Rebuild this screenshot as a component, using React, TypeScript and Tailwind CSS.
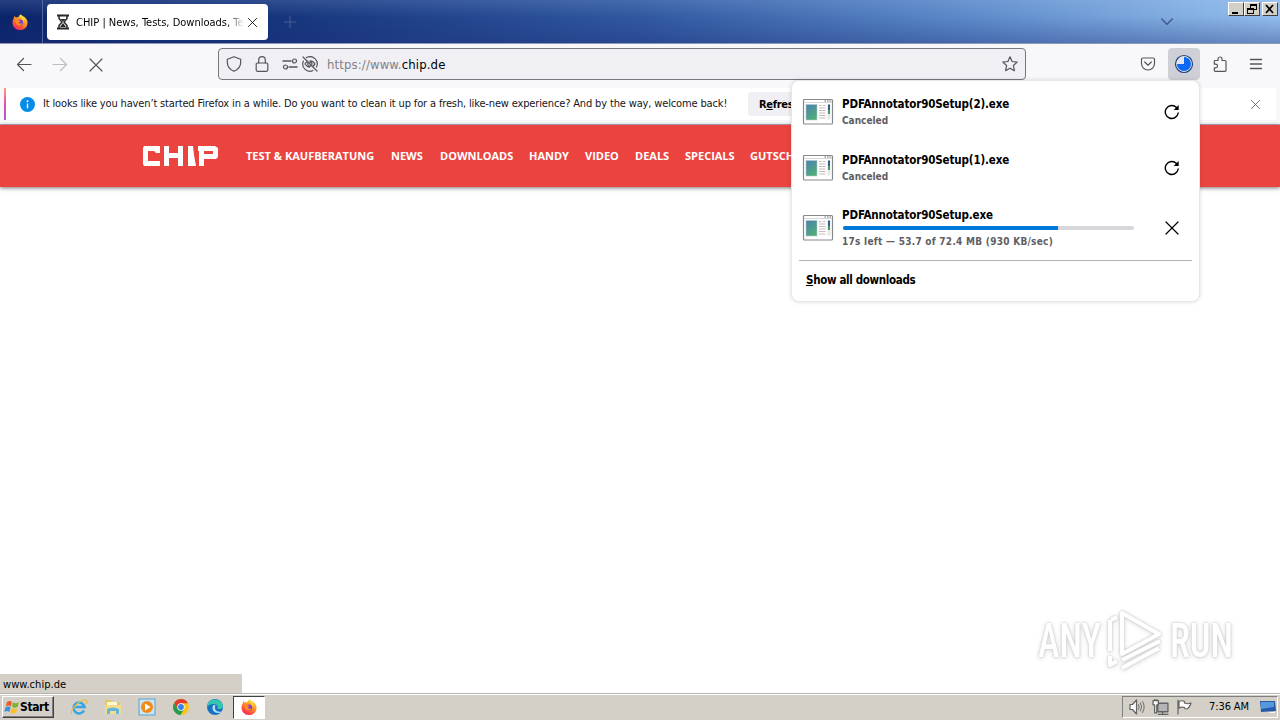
import React from 'react';

type P = { children?: React.ReactNode; className?: string };
const Ic = ({ children, className = '' }: P) => (
  <svg viewBox="0 0 16 16" fill="none" stroke="currentColor" strokeWidth="1.2" strokeLinecap="round" strokeLinejoin="round" className={`block shrink-0 ${className}`}>{children}</svg>
);
const Close = ({ className = '' }: P) => <Ic className={className}><path d="M2 2l12 12M14 2L2 14" /></Ic>;

const Firefox = ({ className = '' }: P) => (
  <svg viewBox="0 0 16 16" className={`block shrink-0 ${className}`}>
    <defs>
      <linearGradient id="fx" x1="0.8" y1="0" x2="0.2" y2="1"><stop offset="0" stopColor="#ffe23a" /><stop offset=".4" stopColor="#ff9a22" /><stop offset=".75" stopColor="#ff4a3d" /><stop offset="1" stopColor="#e8207a" /></linearGradient>
    </defs>
    <path d="M8.6 0.4c1.2 1 1.8 1.9 2 2.8.5-.3.8-.6 1-1 2 1.500 4 3.600 4 6.600A7.500 7.200 0 0 1 .5 8.800c0-2 .7-3.600 1.400-4.700l.3-2 1.700 1.500c.8-.5 1.600-.5 2.400-.4.400-1.200 1.200-2.200 2.300-2.800z" fill="url(#fx)" />
    <circle cx="8" cy="8.500" r="3.100" fill="#7a3bd8" />
    <path d="M3.800 6.200c1.200-.6 2.200-.3 3 .3l1.900.2c-.2 1-1.300 1.100-1.900 1.600.1 1.500 2.400 1.500 3.600.6-.5 2.400-3 3.400-4.800 2.200C4 10 3.300 8 3.800 6.200z" fill="#ff8a1e" />
    <path d="M8.600.4c-1.500 3 2.800 3.500 3.200 7.600.7-1.600.4-2.900-.2-3.800l1.700 1C12.400 3 10.600 2 8.600.4z" fill="#ffd83a" />
  </svg>
);

const AppIcon = () => (
  <svg viewBox="0 0 32 28" className="block h-[28px] w-[32px] shrink-0">
    <defs><linearGradient id="scr" x1="0" y1="0" x2=".6" y2="1"><stop offset="0" stopColor="#4b7fb0" /><stop offset="1" stopColor="#4fae78" /></linearGradient></defs>
    <rect x="1.500" y="1.500" width="29" height="24.500" rx="1" fill="#fff" stroke="#85898d" strokeWidth="1.200" />
    <path d="M2 4.500h28" stroke="#d5d8da" /><path d="M22.500 3h1.500M25 3h1.500M27.500 3h1.500" stroke="#666" />
    <rect x="4" y="6.500" width="11" height="15.500" fill="url(#scr)" stroke="#b9c7cc" strokeWidth=".6" />
    <path d="M17 7.500h2.500M21 7.500h2.500M17 10h6.500M17 12.500h6.500M17 15h6.500M17 17.500h6.500M17 20h6.500" stroke="#c9bcb8" />
    <rect x="25.500" y="6.500" width="3" height="15" fill="#e4e8e4" /><path d="M27 6.500v7" stroke="#355e8c" strokeWidth="2" /><path d="M27 12v4" stroke="#4c9a68" strokeWidth="2" />
  </svg>
);

const Retry = () => (
  <Ic className="size-[16px] text-black"><path d="M14.200 9a6.500 6.500 0 1 1-1.700-5.500" strokeWidth="1.400" /><path d="M14.700 1v5h-5z" fill="currentColor" stroke="none" /></Ic>
);

const files = [
  { name: 'PDFAnnotator90Setup(2).exe', box: 'h-[56px]' },
  { name: 'PDFAnnotator90Setup(1).exe', box: 'h-[56px]' },
];

const Downloads = () => (
  <div className="absolute left-[791px] top-[80px] h-[222px] w-[409px] rounded-lg border border-[#e8e8ec] bg-white px-[7px] pt-[3px] text-black shadow-[0_0_4px_rgba(0,0,0,0.14)]">
    {files.map((f) => (
      <div key={f.name} className={`flex items-center pl-[3px] ${f.box}`}>
        <AppIcon />
        <div className="ml-[8px] flex-1 font-bold">
          <div className="text-[11.500px] leading-[16px] tracking-[-0.14px]">{f.name}</div>
          <div className="h-[16px] pt-px text-[10px] leading-[16px] text-[#5e5e62]">Canceled</div>
        </div>
        <div className="mr-[12px]"><Retry /></div>
      </div>
    ))}
    <div className="flex h-[64px] items-center pl-[3px]">
      <AppIcon />
      <div className="ml-[8px] w-[292px] font-bold whitespace-nowrap">
        <div className="h-[16px] text-[11.500px] leading-[16px] tracking-[-0.14px]">PDFAnnotator90Setup.exe</div>
        <div className="mt-[3px] ml-px h-[4px] rounded-full bg-[#d7d7db]"><div className="h-full w-[215px] rounded-l-full bg-[#0078d7]" /></div>
        <div className="mt-[3px] h-[16px] pt-px text-[10px] leading-[16px] tracking-[0.27px] text-[#5e5e62]">17s left — 53.7 of 72.4 MB (930 KB/sec)</div>
      </div>
      <Close className="ml-[30px] size-[16px]" />
    </div>
    <div className="h-px bg-[#b4b4b8]" />
    <div className="pl-[7px] text-[11.500px] font-bold leading-[38px] tracking-[-0.34px]"><span className="underline">S</span>how all downloads</div>
  </div>
);

const nav = [
  ['TEST & KAUFBERATUNG', 'w-[145px]'], ['NEWS', 'w-[49px]'], ['DOWNLOADS', 'w-[89px]'], ['HANDY', 'w-[56px]'],
  ['VIDEO', 'w-[50px]'], ['DEALS', 'w-[50px]'], ['SPECIALS', 'w-[65px]'], ['GUTSCH', 'w-[45px]'],
];

const WinBtn = ({ children, className = '' }: P) => (
  <div className={`flex h-[14px] w-[16px] items-center justify-center border border-t-white border-l-white border-r-[#404040] border-b-[#404040] bg-[#d4d0c8] text-black ${className}`}>
    <svg viewBox="0 0 14 12" className="h-[12px] w-[14px]" fill="none" stroke="currentColor" shapeRendering="crispEdges">{children}</svg>
  </div>
);

export default function App() {
  return (
    <div className="relative flex h-[720px] w-[1280px] flex-col overflow-hidden bg-white font-['DejaVu_Sans_Condensed','DejaVu_Sans',sans-serif] [font-stretch:condensed]">
      <header className="relative flex h-[43px] shrink-0 items-start bg-[linear-gradient(90deg,#0a246a_0%,#16357d_22%,#3058a0_50%,#5a88c8_75%,#92bdec_100%)]">
        <div className="absolute inset-0 bg-[linear-gradient(180deg,rgba(200,225,255,0.14),transparent_40%,rgba(30,45,120,0.35))]" />
        <div className="relative flex h-[43px] w-[43px] items-center justify-center border-r border-[#52669b] pr-[3px]"><Firefox className="size-[16px]" /></div>
        <div className="relative mt-[4px] ml-[4px] flex h-[36px] w-[221px] items-center rounded bg-white pl-[9px]">
          <svg viewBox="0 0 14 16" className="h-[16px] w-[14px]" fill="none" stroke="#28282d" strokeWidth="1.500"><path d="M1 1.500h12M1 14.500h12" strokeWidth="2" /><path d="M3 2v2.500L6 8l-3 3.500V14M11 2v2.500L8 8l3 3.500V14" /><path d="M4.500 5h5L7 7.500zM7 9l3 4H4z" fill="#28282d" stroke="none" /></svg>
          <div className="ml-[6px] w-[168px] overflow-hidden whitespace-nowrap pt-[2px] text-[11px] text-black [mask-image:linear-gradient(90deg,#000_90%,transparent)]">CHIP | News, Tests, Downloads, Te</div>
          <Close className="ml-[3px] size-[11px] text-black" />
        </div>
        <Ic className="relative mt-[16px] ml-[16px] size-[12px] text-[#4f658f]"><path d="M8 0v16M0 8h16" /></Ic>
        <Ic className="relative mt-[16px] ml-auto mr-[107px] size-[12px] text-[#405b8b]"><path d="M1 4l7 7 7-7" strokeWidth="2" /></Ic>
        <div className="absolute top-[2px] right-[2px] flex">
          <WinBtn><path d="M3 9.500h6" strokeWidth="2" /></WinBtn>
          <WinBtn><path d="M5.500 5V1.500h6v5H9M5 2h7M2.500 5.500h6v5h-6zM2 6h7" /></WinBtn>
          <WinBtn className="ml-[2px]"><path d="M3 2l7 8M10 2l-7 8" strokeWidth="1.700" shapeRendering="auto" /></WinBtn>
        </div>
      </header>

      <div className="flex h-[45px] shrink-0 items-center border-t border-[#8f99b5] bg-[#f8f8fb] pb-[4px] text-[#55555e]">
        <Ic className="ml-[16px] size-[16px]"><path d="M15 8.500H1.500M7.500 2.500L1.500 8.500l6 6" /></Ic>
        <Ic className="ml-[20px] size-[16px] text-[#bdbdc2]"><path d="M1 8.500h13.500M8.500 2.500l6 6-6 6" /></Ic>
        <Close className="mt-px ml-[20px] size-[16px]" />
        <div className="ml-[114px] flex h-[32px] w-[808px] items-center rounded border border-[#77777f] bg-[#efeff4] pl-[7px]">
          <Ic className="size-[16px]"><path d="M8 .7l6.700 2.500v3.300c0 4-2.500 7-6.700 8.800C3.800 13.500 1.300 10.500 1.300 6.500V3.200z" /></Ic>
          <Ic className="ml-[12px] size-[16px]"><rect x="2.200" y="7" width="11.600" height="8.300" rx="1.200" /><path d="M4.700 7V4a3.300 3.300 0 0 1 6.600 0v3" /></Ic>
          <Ic className="ml-[12px] size-[16px]"><path d="M1 5h8M7 11h8" strokeWidth="1.500" /><circle cx="12.500" cy="5" r="2" /><circle cx="3.500" cy="11" r="2" /></Ic>
          <Ic className="ml-[4px] size-[16px]"><path d="M1 1l14 14M4.500 1.600A7.200 7.200 0 0 1 14.500 11M1.400 5A7.200 7.200 0 0 0 11 14.500M3 7.800c1-1.300 2-2 3-2.400M8 4.800c2.300 0 4 1.500 5 3.200l-1.700 2M3 8c1 1.600 2.500 2.900 4.600 3.100M6 7a2.200 2.200 0 0 0 2.700 3M8 6.200a2 2 0 0 1 2 2" /></Ic>
          <div className="mt-[2px] ml-[9px] text-[13px] tracking-[0.13px] text-[#818189]">https://www.<span className="text-black">chip.de</span></div>
          <Ic className="ml-auto mr-[7px] size-[16px]"><path d="M8 .8l2.100 4.700 5.100.6-3.800 3.400 1 5.200L8 12.200l-4.400 2.500 1-5.200L.8 6.100l5.100-.6z" /></Ic>
        </div>
        <Ic className="ml-[114px] size-[16px]"><path d="M3 2h10a1.500 1.500 0 0 1 1.500 1.500V7.500a6.500 6.500 0 0 1-13 0V3.500A1.500 1.500 0 0 1 3 2zM4.700 6L8 9.200 11.300 6" /></Ic>
        <div className="ml-[12px] flex size-[32px] items-center justify-center rounded bg-[#cfcfd8]">
          <svg viewBox="0 0 20 20" className="size-[20px]"><circle cx="10" cy="10" r="8.500" fill="#e1e6f0" stroke="#1d4277" strokeWidth="1.200" /><path d="M10 10V3a7 7 0 1 1-7 7z" fill="#0a68f5" /></svg>
        </div>
        <Ic className="ml-[12px] size-[16px]"><path d="M6 4.500V3a2 2 0 0 1 4 0v1.500h3a1 1 0 0 1 1 1v8.800a1 1 0 0 1-1 1H3.300a1 1 0 0 1-1-1v-2.500h1.400a1.800 1.800 0 0 0 0-3.600H2.300V5.500a1 1 0 0 1 1-1z" /></Ic>
        <Ic className="ml-[20px] size-[16px]"><path d="M2.500 3.500h11M2.500 8h11M2.500 12.500h11" strokeWidth="1.400" /></Ic>
      </div>

      <div className="flex h-[37px] shrink-0 border-b border-[#b9aab8] bg-[#f8f8fb] pr-[4px] pb-[4px] pl-[4px]">
        <div className="w-[2px] bg-[linear-gradient(180deg,#ffa07a,#e64bb0_50%,#a25cd8)]" />
        <div className="flex flex-1 items-center bg-white">
          <svg viewBox="0 0 16 16" className="ml-[14px] size-[15px]"><circle cx="8" cy="8" r="8" fill="#058ce8" /><path d="M8 7v5" stroke="#fff" strokeWidth="1.500" /><circle cx="8" cy="4.500" r="1" fill="#fff" /></svg>
          <div className="ml-[8px] w-[705px] whitespace-nowrap text-[11px] tracking-[-0.147px] text-[#15141a]">It looks like you haven’t started Firefox in a while. Do you want to clean it up for a fresh, like-new experience? And by the way, welcome back!</div>
          <div className="h-[24px] w-[46px] rounded-l bg-[#f0f0f4] pl-[11px] text-[11px] font-bold leading-[25px] tracking-[-0.3px] whitespace-nowrap">R<span className="underline">e</span>fres</div>
          <Close className="ml-auto mr-[15px] size-[11px] text-[#5b5b66]" />
        </div>
      </div>

      <nav className="relative flex h-[62px] shrink-0 items-center bg-[#eb4440] pl-[142px] shadow-[0_1px_4px_rgba(0,0,0,0.55)]">
        <svg viewBox="0 0 76 20" className="h-[20px] w-[76px]" fill="#fff"><path d="M2 0h16v7h-4l-2-2H6v10h12v5H2l-1-2V2zM22 0h5v7h9V0h5v20h-5v-8h-9v8h-5zM46 0h5l1 9 2 11h-8zM56 0h17l3 2v9l-2 2H62v7h-5V5h-1zM62 5v3h9V5z" fillRule="evenodd" /></svg>
        <div className="ml-[28px] flex font-['Open_Sans',sans-serif] text-[11px] font-bold text-white [font-stretch:normal]">
          {nav.map(([t, w]) => <div key={t} className={`shrink-0 whitespace-nowrap ${w}`}>{t}</div>)}
        </div>
      </nav>

      <main className="flex flex-1 items-end">
        <div className="h-[19px] w-[242px] bg-[#d4d0c8] pl-[3px] text-[11px] leading-[21px] tracking-[0.05px] text-black">www.chip.de</div>
      </main>

      <footer className="flex h-[27px] shrink-0 items-center border-t border-[#b5b5b5] bg-[#d4d0c8] shadow-[inset_0_1px_0_#fff]">
        <div className="ml-[2px] flex h-[22px] w-[52px] items-center border border-t-white border-l-white border-r-[#404040] border-b-[#404040] shadow-[inset_-1px_-1px_0_#808080]">
          <svg viewBox="0 0 16 16" className="ml-px size-[16px]"><path d="M3 3q3-2 5 0L6.800 7.500q-2-2-5 0z" fill="#ef5b25" /><path d="M9 3.300q3 2 6 0l-1.300 4.500q-3 2-5.700 0z" fill="#79b530" /><path d="M1.500 8.500q3-2 5 0L5.300 13q-2-2-5 0z" fill="#3c8fda" /><path d="M7.700 8.900q3 2 5.700 0L12 13.500q-3 2-5.700 0z" fill="#fbc126" /></svg>
          <span className="text-[12px] font-bold tracking-[-0.4px] text-black">Start</span>
        </div>
        <svg viewBox="0 0 18 18" className="ml-[16px] size-[18px]" fill="none"><path d="M14 12.500A5.500 5.500 0 1 1 14.500 9H5" stroke="#35a5e5" strokeWidth="2.600" /><path d="M2 16C-1 13 10 1 16 2c1.500.5 1 2.500 0 4" stroke="#e8bd45" strokeWidth="1.200" /></svg>
        <svg viewBox="0 0 18 18" className="ml-[16px] size-[18px]"><path d="M1 2h6l1 2h8v12H1z" fill="#e5c865" /><path d="M3 4h10v5H3z" fill="#fff8cf" /><path d="M1 7h16v9H1z" fill="#f3dd8c" /><path d="M3 16v-5q6-3 12 0v5h-3v-3H6v3z" fill="#62b7df" /></svg>
        <svg viewBox="0 0 18 18" className="ml-[16px] size-[18px]"><rect x="1" y="1" width="16" height="16" fill="#c7e5f6" stroke="#5ba1c9" /><circle cx="9" cy="9" r="6" fill="#f28a1c" /><path d="M7 5.500v7l5.500-3.500z" fill="#fff" /></svg>
        <svg viewBox="0 0 16 16" className="ml-[17px] size-[16px]"><circle cx="8" cy="8" r="8" fill="#f9c51c" /><path d="M1.100 4A8 8 0 0 1 15 4.300H8L4.800 10z" fill="#e33b2e" /><path d="M1.100 4A8 8 0 0 0 7.500 16l3.500-6-6 .3z" fill="#259b4e" /><circle cx="8" cy="8" r="3.700" fill="#fff" /><circle cx="8" cy="8" r="2.900" fill="#3c7eea" /></svg>
        <svg viewBox="0 0 16 16" className="ml-[18px] size-[16px]"><circle cx="8" cy="8" r="8" fill="#1473c5" /><path d="M.3 6C2-1.500 14-1.500 15.800 6c.6 3-1.500 4.500-5.300 4 .8-3-.8-5-4-5C3.500 5 1.500 6 .3 8z" fill="#35c4b0" /><path d="M6.500 6C4 9 6 14 11.500 14c1.500 0 3-.7 3.500-1.500-1 .4-7 1-7-4 0-1 .7-2 0-2.500z" fill="#b6dcf0" /></svg>
        <div className="ml-[10px] flex h-[23px] w-[32px] items-center justify-center border border-t-[#404040] border-l-[#404040] border-r-white border-b-white bg-white"><Firefox className="size-[16px]" /></div>
        <div className="ml-auto mr-[2px] flex h-[22px] w-[156px] items-center border border-t-[#808080] border-l-[#808080] border-r-white border-b-white pl-[6px] text-[#626262]">
          <Ic className="size-[16px]"><path d="M1 5.500h2.500L7.500 1v14l-4-4.500H1z" fill="#fff" /><path d="M9.500 5.500q1.500 2.500 0 5M11.500 4q2.500 4 0 8M13.500 2.500q3.500 5.500 0 11" strokeWidth=".9" /></Ic>
          <Ic className="ml-[7px] size-[17px]"><rect x="5.500" y="4" width="9.500" height="8" fill="#b5b5b5" /><path d="M6 14.500h9M10 12v2" /><path d="M1 1.500h5v4H4.500V13H2.500V5.500H1zM2.500 1.500V.5M4.500 1.500V.5" fill="#fff" /></Ic>
          <Ic className="ml-[7px] size-[16px]"><path d="M2 1v14M3 2.500q3-1.500 5.500 0V4q3 1.500 6.500 0-1.500 5-4.500 6-2 0-2-1.500Q6 7.500 3 9z" fill="#fff" /></Ic>
          <div className="ml-[17px] w-[42px] whitespace-nowrap pt-px text-[11px] tracking-[-0.1px] text-black">7:36 AM</div>
          <svg viewBox="0 0 16 14" className="ml-[9px] h-[14px] w-[16px]"><path d="M0 1h15l1 10-15 1z" fill="#245ba8" /><path d="M1 2h13v5L1 9z" fill="#5798dc" /><path d="M9 12h6v1H9z" fill="#f4f4f4" /></svg>
        </div>
      </footer>

      <div className="absolute top-[610px] left-[1038px] flex h-[62px] w-[196px] items-center justify-between text-white [filter:drop-shadow(0_0_1px_#c4c4c4)_drop-shadow(0_1px_2px_#ddd)]">
        <span className="w-[66px] origin-left scale-x-[0.76] font-['Roboto',sans-serif] text-[48px] font-medium [font-stretch:75%]">ANY</span>
        <svg viewBox="0 0 60 62" className="absolute left-[68px] h-[62px] w-[60px]" fill="none" stroke="#fff" strokeWidth="4" strokeLinejoin="round"><path d="M16 3v41l37-20z" /><path d="M4 10v31M4 46v9l7-4M16 50l38-19M16 58l37-20" /><path d="M5 10l6-3" /></svg>
        <span className="w-[64px] origin-left scale-x-[0.76] font-['Roboto',sans-serif] text-[48px] font-medium [font-stretch:75%]">RUN</span>
      </div>
      <Downloads />
    </div>
  );
}
